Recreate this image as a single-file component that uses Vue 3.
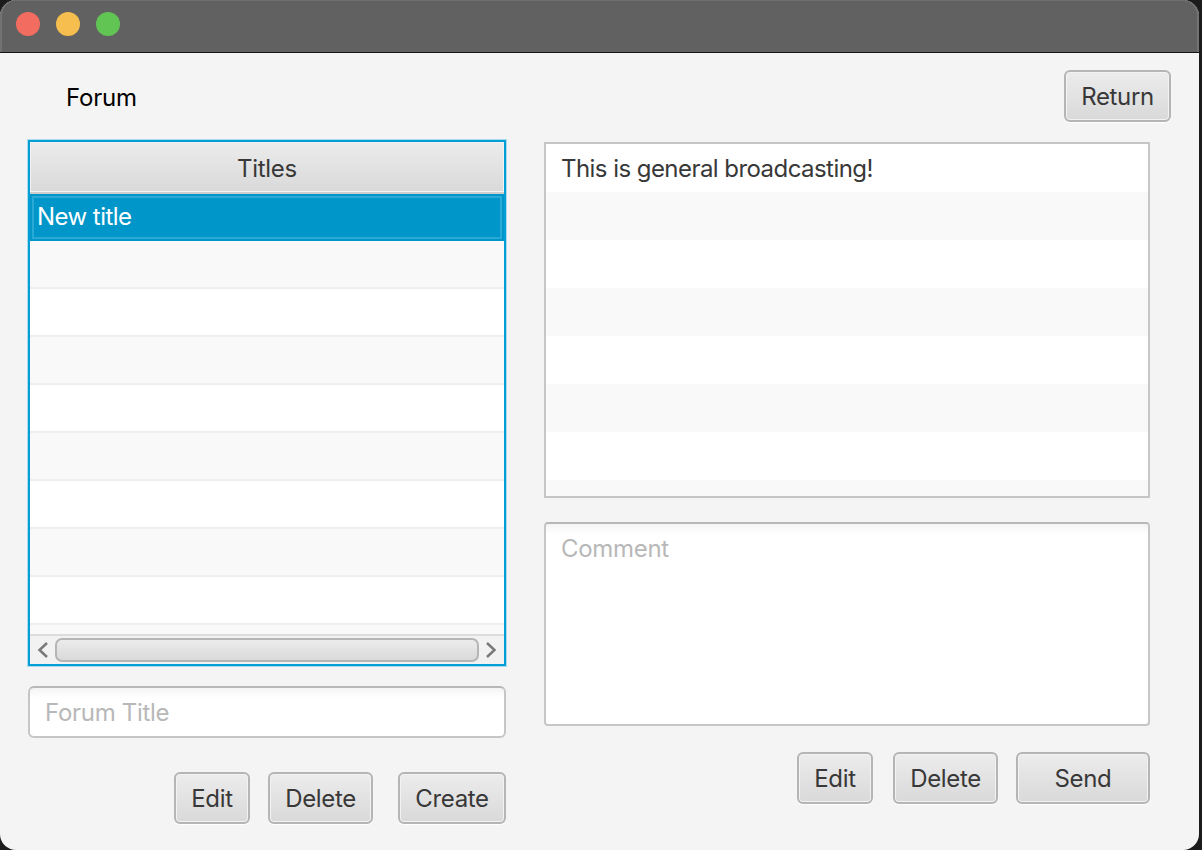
<template>
  <div class="screen">
    <div class="window">
      <div class="titlebar">
        <span class="light red"></span>
        <span class="light yellow"></span>
        <span class="light green"></span>
      </div>
      <div class="content">
        <div class="top-row">
          <span class="page-title">Forum</span>
          <button class="btn btn-return">Return</button>
        </div>
        <div class="columns">
          <div class="left-col">
            <div class="table">
              <div class="table-header">Titles</div>
              <div class="table-body">
                <div class="row selected">New title</div>
                <div
                  v-for="n in 8"
                  :key="n"
                  class="row"
                  :class="{ odd: n % 2 === 1 }"
                ></div>
                <div class="row-tail"></div>
              </div>
              <div class="scrollbar">
                <svg class="arrow" width="14" height="18" viewBox="0 0 14 18">
                  <path d="M11 2 L3.5 9 L11 16" />
                </svg>
                <div class="thumb"></div>
                <svg class="arrow" width="14" height="18" viewBox="0 0 14 18">
                  <path d="M3 2 L10.5 9 L3 16" />
                </svg>
              </div>
            </div>
            <input class="field title-field" type="text" placeholder="Forum Title" />
            <div class="actions left-actions">
              <button class="btn btn-edit">Edit</button>
              <button class="btn btn-delete">Delete</button>
              <button class="btn btn-create">Create</button>
            </div>
          </div>
          <div class="right-col">
            <div class="messages">
              <div class="message">This is general broadcasting!</div>
              <div
                v-for="n in 7"
                :key="n"
                class="message"
                :class="{ odd: n % 2 === 1 }"
              ></div>
            </div>
            <textarea class="field comment-field" placeholder="Comment"></textarea>
            <div class="actions right-actions">
              <button class="btn btn-edit">Edit</button>
              <button class="btn btn-delete">Delete</button>
              <button class="btn btn-send">Send</button>
            </div>
          </div>
        </div>
      </div>
    </div>
  </div>
</template>

<script setup>
</script>

<style>
html,
body {
  margin: 0;
  background: #1c1c1c;
}
</style>

<style scoped>
.screen {
  width: 1202px;
  height: 850px;
  overflow: hidden;
  background: #1c1c1c;
}

.window {
  width: 1199px;
  height: 850px;
  overflow: hidden;
  display: flex;
  flex-direction: column;
  border-radius: 16px;
  background: #f4f4f4;
  font-family: Inter, "Liberation Sans", sans-serif;
  letter-spacing: -0.55px;
  color: #383838;
}

.titlebar {
  height: 53px;
  flex: none;
  display: flex;
  align-items: center;
  gap: 16px;
  padding: 0 0 4px 16px;
  box-sizing: border-box;
  background: #616161;
  border-bottom: 1px solid #141414;
  border-radius: 16px 16px 0 0;
  box-shadow: inset 0 1px 0 #6e6e6e, inset 2px 0 0 #727272, inset -2px 0 0 #727272;
}

.light {
  width: 24px;
  height: 24px;
  border-radius: 50%;
}

.red {
  background: #f26d60;
}

.yellow {
  background: #f5be4f;
}

.green {
  background: #61c554;
}

.content {
  flex: 1;
  padding: 17px 28px 0 28px;
}

.top-row {
  display: flex;
  justify-content: space-between;
  align-items: center;
  height: 52px;
  margin-bottom: 18px;
}

.page-title {
  margin: 2px 0 0 38px;
  font-size: 24px;
  letter-spacing: -0.2px;
  color: #000;
}

.columns {
  display: flex;
  gap: 38px;
  align-items: flex-start;
}

.left-col {
  width: 478px;
  display: flex;
  flex-direction: column;
}

.right-col {
  width: 606px;
  margin-top: 2px;
  display: flex;
  flex-direction: column;
}

.btn {
  height: 52px;
  box-sizing: border-box;
  padding: 0;
  border: 2px solid #b5b5b5;
  border-radius: 6px;
  background: linear-gradient(#ececec, #d9d9d9);
  box-shadow: inset 0 0 0 1px #f2f2f2, 0 1px 1px #fff;
  font-family: inherit;
  font-size: 24px;
  letter-spacing: -0.35px;
  color: #383838;
}

.btn-return {
  width: 107px;
}

.btn-edit {
  width: 76px;
}

.btn-delete {
  width: 105px;
}

.btn-create {
  width: 108px;
}

.btn-send {
  width: 134px;
}

.table {
  height: 526px;
  box-sizing: border-box;
  display: flex;
  flex-direction: column;
  border: 2px solid #039ed3;
  box-shadow: 0 0 0 1px #a9dcef;
  background: #fff;
}

.table-header {
  height: 52px;
  flex: none;
  display: flex;
  align-items: center;
  justify-content: center;
  padding-top: 2px;
  box-sizing: border-box;
  font-size: 24px;
  letter-spacing: -0.3px;
  background: linear-gradient(#ececec, #d9d9d9);
  border-bottom: 2px solid #cdcdcd;
  box-shadow: inset 0 0 0 1px #f2f2f2;
}

.table-body {
  flex: 1;
  min-height: 0;
  overflow: hidden;
}

.row {
  height: 48px;
  box-sizing: border-box;
  border-bottom: 2px solid #eeeeee;
  background: #fff;
}

.row.odd {
  background: #f9f9f9;
}

.row.selected {
  height: 47px;
  display: flex;
  align-items: center;
  padding: 0 0 3px 7px;
  border-bottom: none;
  outline: 2px solid #2aa9d6;
  outline-offset: -4px;
  font-size: 24px;
  color: #fff;
  background: #0096c9;
}

.row-tail {
  height: 9px;
  background: #f9f9f9;
}

.scrollbar {
  height: 30px;
  flex: none;
  box-sizing: border-box;
  display: flex;
  align-items: center;
  gap: 5px;
  padding: 0 6px;
  border-top: 2px solid #dcdcdc;
  background: #f2f2f2;
}

.arrow {
  flex: none;
}

.arrow path {
  fill: none;
  stroke: #7a7a7a;
  stroke-width: 2.5;
}

.thumb {
  flex: 1;
  height: 24px;
  box-sizing: border-box;
  border: 2px solid #b5b5b5;
  border-radius: 7px;
  background: linear-gradient(#ececec, #d9d9d9);
}

.field {
  display: block;
  width: 100%;
  box-sizing: border-box;
  padding: 0 15px;
  border: 2px solid #c6c6c6;
  border-top-color: #b8b8b8;
  border-radius: 6px;
  outline: none;
  background: linear-gradient(#f4f4f4, #fff 10px);
  font-family: inherit;
  font-size: 24px;
  letter-spacing: -0.3px;
  color: #383838;
}

.field::placeholder {
  color: #b8b8b8;
  opacity: 1;
}

.title-field {
  height: 52px;
  margin-top: 20px;
}

.comment-field {
  height: 204px;
  margin-top: 24px;
  padding-top: 10px;
  resize: none;
  border-radius: 4px;
}

.actions {
  display: flex;
  justify-content: flex-end;
}

.left-actions {
  margin-top: 34px;
}

.left-actions .btn-delete {
  margin-left: 18px;
}

.left-actions .btn-create {
  margin-left: 25px;
}

.right-actions {
  margin-top: 26px;
}

.right-actions .btn-delete {
  margin-left: 20px;
}

.right-actions .btn-send {
  margin-left: 18px;
}

.messages {
  height: 356px;
  box-sizing: border-box;
  overflow: hidden;
  border: 2px solid #c6c6c6;
  background: #fff;
}

.message {
  height: 48px;
  box-sizing: border-box;
  display: flex;
  align-items: center;
  padding-left: 15px;
  font-size: 24px;
  background: #fff;
}

.message.odd {
  background: #f9f9f9;
}
</style>
